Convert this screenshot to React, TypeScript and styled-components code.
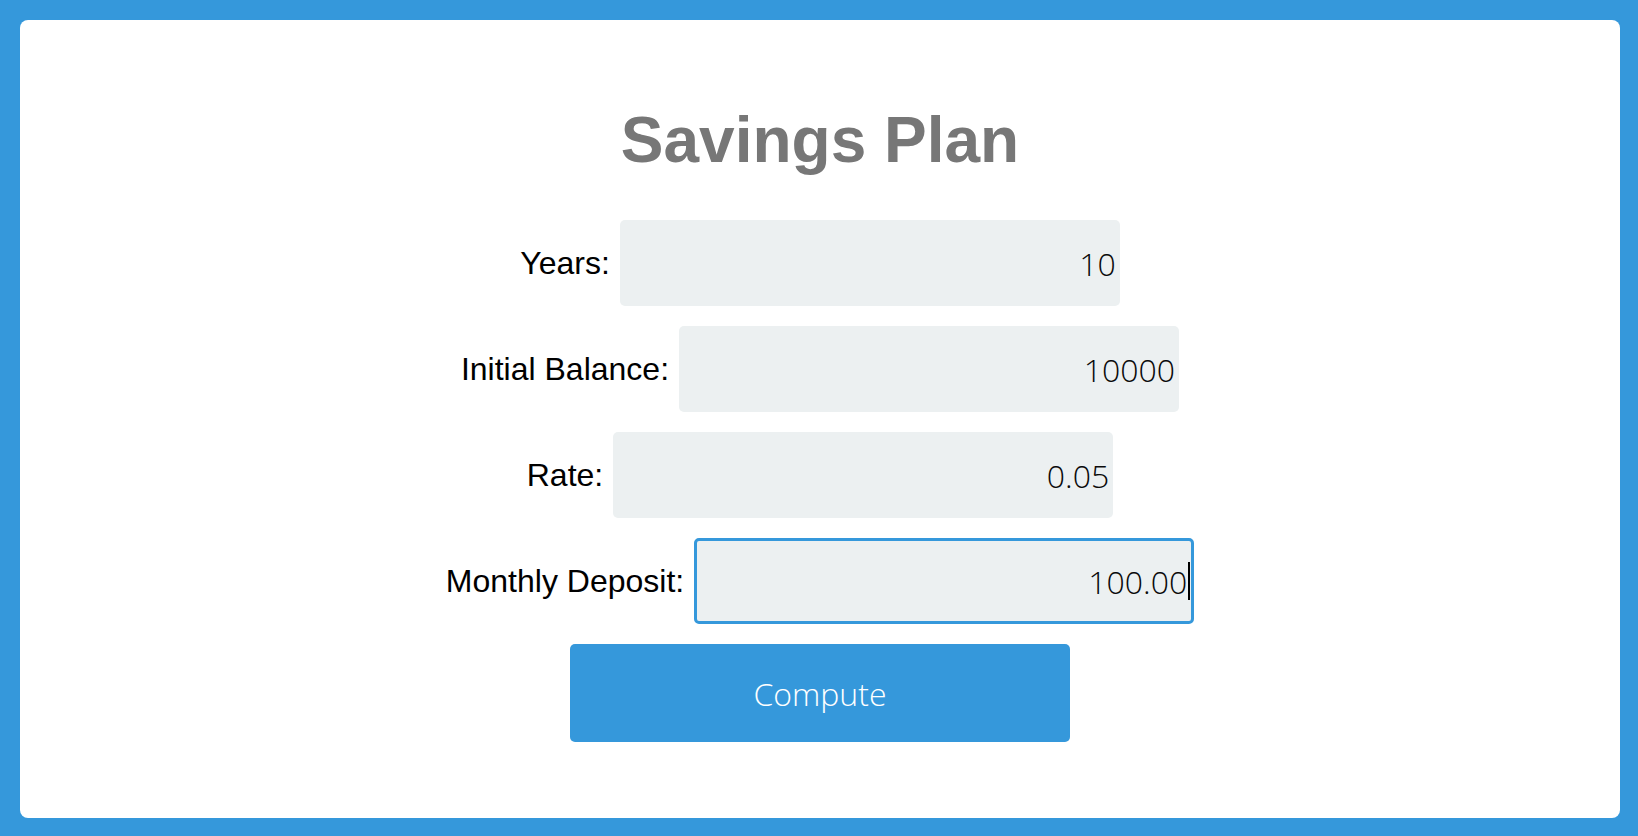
import type { FC } from 'react';
import styled, { createGlobalStyle } from 'styled-components';

const GlobalStyle = createGlobalStyle`
  html, body {
    margin: 0;
    height: 100%;
  }

  body {
    background: #3598db;
    padding: 20px 18px 18px 20px;
    box-sizing: border-box;
    font-family: 'Liberation Sans', Arial, sans-serif;
  }

  #root {
    height: 100%;
  }
`;

const StyledCard = styled.main`
  height: 100%;
  box-sizing: border-box;
  background: #ffffff;
  border-radius: 8px;
  padding-top: 88px;
  display: flex;
  flex-direction: column;
  align-items: center;
`;

const StyledTitle = styled.h1`
  margin: 0 0 48px;
  font-family: 'Liberation Sans', Arial, sans-serif;
  font-size: 64px;
  font-weight: 700;
  line-height: 1;
  color: #777777;
`;

const StyledForm = styled.form`
  display: flex;
  flex-direction: column;
  align-items: center;
  gap: 20px;
`;

const StyledRow = styled.div`
  display: flex;
  align-items: center;
  gap: 10px;
`;

const StyledLabel = styled.label`
  font-family: 'Liberation Sans', Arial, sans-serif;
  font-size: 32px;
  color: #000000;
`;

const StyledField = styled.div`
  position: relative;
`;

const StyledInput = styled.input<{ $focused?: boolean }>`
  display: block;
  box-sizing: border-box;
  width: 500px;
  height: 86px;
  padding: 0 4px 0 10px;
  border: ${({ $focused }) => ($focused ? '3px solid #3598db' : 'none')};
  border-radius: 5px;
  background: #ecf0f1;
  font-family: 'Open Sans', sans-serif;
  font-weight: 300;
  font-size: 32px;
  color: #0a0a0a;
  text-align: right;
  outline: none;
`;

const StyledCaret = styled.span`
  position: absolute;
  right: 4px;
  top: 24px;
  width: 2px;
  height: 38px;
  background: #000000;
`;

const StyledButton = styled.button`
  width: 500px;
  height: 98px;
  border: none;
  border-radius: 5px;
  background: #3598db;
  color: #ffffff;
  font-family: 'Open Sans', sans-serif;
  font-weight: 300;
  font-size: 32px;
  cursor: pointer;
`;

const fields = [
  { id: 'years', label: 'Years:', value: '10' },
  { id: 'balance', label: 'Initial Balance:', value: '10000' },
  { id: 'rate', label: 'Rate:', value: '0.05' },
  { id: 'deposit', label: 'Monthly Deposit:', value: '100.00', focused: true },
];

const App: FC = () => {
  return (
    <>
      <GlobalStyle />
      <StyledCard>
        <StyledTitle>Savings Plan</StyledTitle>
        <StyledForm onSubmit={(e) => e.preventDefault()}>
          {fields.map((field) => (
            <StyledRow key={field.id}>
              <StyledLabel htmlFor={field.id}>{field.label}</StyledLabel>
              <StyledField>
                <StyledInput
                  id={field.id}
                  type="text"
                  defaultValue={field.value}
                  $focused={field.focused}
                />
                {field.focused && <StyledCaret />}
              </StyledField>
            </StyledRow>
          ))}
          <StyledButton type="submit">Compute</StyledButton>
        </StyledForm>
      </StyledCard>
    </>
  );
};

export default App;
